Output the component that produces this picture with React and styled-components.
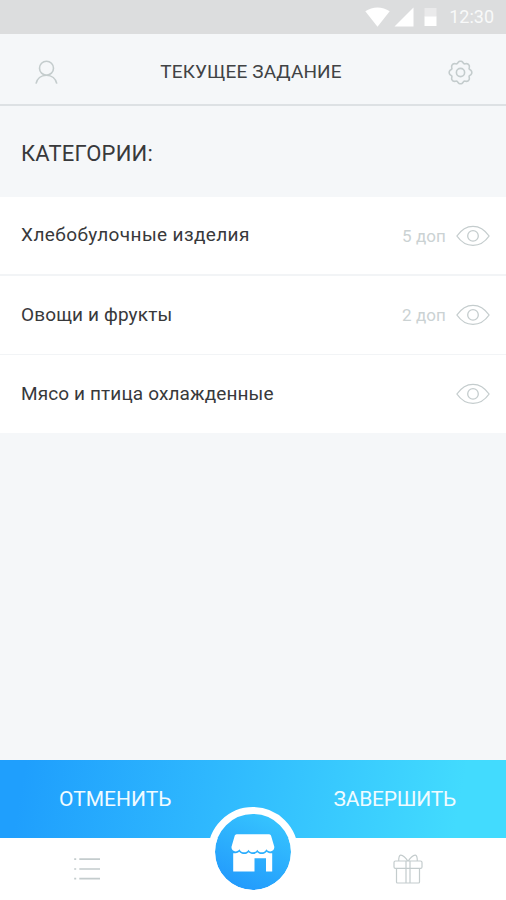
import React from "react";
import styled, { createGlobalStyle } from "styled-components";

const GlobalStyle = createGlobalStyle`
  :root {
    --bg: #f5f7f9;
    --text: #38393b;
    --muted: #cbd2d3;
    --icon: #c4cccd;
  }

  * {
    box-sizing: border-box;
  }

  body {
    margin: 0;
    background: var(--bg);
    font-family: Roboto, "Liberation Sans", sans-serif;
  }
`;

const Screen = styled.div`
  display: flex;
  flex-direction: column;
  width: 506px;
  height: 900px;
  background: var(--bg);
  overflow: hidden;
`;

const StatusBar = styled.div`
  display: flex;
  flex: none;
  justify-content: flex-end;
  align-items: center;
  height: 34px;
  padding-right: 12px;
  background: #dcddde;
`;

const Clock = styled.span`
  margin-left: 12px;
  font-size: 18px;
  line-height: 34px;
  color: #f8f9f9;
`;

const Header = styled.header`
  display: flex;
  flex: none;
  justify-content: space-between;
  align-items: center;
  height: 72px;
  padding: 7px 33px 0 34px;
  border-bottom: 2px solid #dde1e4;
`;

const Title = styled.h1`
  margin: 0 0 3px;
  padding-right: 5px;
  font-size: 19px;
  font-weight: 400;
  letter-spacing: 0.12px;
  color: #414345;
`;

const Heading = styled.h2`
  flex: none;
  height: 91px;
  margin: 0;
  padding: 1px 21px 0;
  font-size: 22px;
  font-weight: 400;
  line-height: 94px;
  letter-spacing: 0.2px;
  color: var(--text);
`;

const List = styled.ul`
  margin: 0;
  padding: 0;
  list-style: none;
`;

const Row = styled.li`
  display: flex;
  align-items: center;
  height: ${({ height }) => height}px;
  padding: 0 16px 0 21px;
  background: #fff;
  border-bottom: ${({ $divider }) => $divider}px solid #f2f4f6;
`;

const RowName = styled.span`
  flex: 1;
  padding-bottom: 1px;
  font-size: 19px;
  line-height: 24px;
  letter-spacing: ${({ $spacing }) => $spacing}px;
  color: var(--text);
`;

const RowCount = styled.span`
  margin-right: 10px;
  font-size: 17px;
  line-height: 24px;
  letter-spacing: 0.1px;
  color: var(--muted);
`;

const Footer = styled.footer`
  position: relative;
  flex: none;
  margin-top: auto;
`;

const Actions = styled.div`
  display: flex;
  justify-content: space-between;
  height: 78px;
  padding: 0 50px 0 59px;
  background: linear-gradient(100deg, #1f9ffd 5%, #2fb9fe 43%, #42dbfe 90%);
`;

const Action = styled.button`
  padding: 0;
  border: 0;
  background: none;
  font: 400 21px/77px Roboto, "Liberation Sans", sans-serif;
  letter-spacing: ${({ $spacing }) => $spacing}px;
  color: #f0fbff;
  cursor: pointer;
`;

const Tabs = styled.nav`
  display: flex;
  justify-content: space-between;
  align-items: center;
  height: 62px;
  padding: 0 83px 0 74px;
  background: #fff;
`;

const ShopButton = styled.button`
  position: absolute;
  top: 47px;
  left: 208px;
  display: flex;
  width: 90px;
  height: 90px;
  padding: 2px 0 0;
  align-items: center;
  justify-content: center;
  border: 7px solid #fff;
  border-radius: 50%;
  background: linear-gradient(25deg, #2197fc 5%, #36c4fe 90%) padding-box;
  cursor: pointer;
`;

const Icon = styled.svg`
  display: block;
  flex: none;
  fill: none;
  stroke: var(--icon);
  stroke-width: ${({ $weight }) => $weight || 1.6};
`;

const SolidIcon = styled.svg`
  display: block;
  flex: none;
  margin-left: ${({ $gap }) => $gap || 0}px;
  fill: #fff;
`;

// eight rounded teeth around the centre
const gearPath =
  Array.from({ length: 97 }, (_, i) => {
    const a = (i / 96) * Math.PI * 2;
    const r = 10.5 + 0.95 * Math.cos(8 * a) - 0.15 * Math.cos(16 * a);
    const x = (12.5 + r * Math.sin(a)).toFixed(2);
    const y = (12.5 - r * Math.cos(a)).toFixed(2);
    return `${i ? "L" : "M"}${x} ${y}`;
  }).join("") + "Z";

const UserIcon = () => (
  <Icon width="25" height="25" viewBox="0 0 25 25">
    <circle cx="12.5" cy="8.2" r="7" />
    <path d="M2 23.6c1-5 5-8.400 10.400-8.400s9.400 3.400 10.400 8.400" />
  </Icon>
);

const GearIcon = () => (
  <Icon width="25" height="25" viewBox="0 0 25 25">
    <path d={gearPath} />
    <circle cx="12.5" cy="12.5" r="4.1" />
  </Icon>
);

const EyeIcon = () => (
  <Icon width="34" height="22" viewBox="0 0 34 22" $weight={1.3}>
    <path d="M.9 11C5.2 4.8 10.6 1.3 17 1.3S28.8 4.8 33.1 11C28.8 17.2 23.4 20.4 17 20.4S5.2 17.2.9 11Z" />
    <circle cx="17" cy="10.9" r="5.3" />
  </Icon>
);

const ListIcon = () => (
  <Icon width="26" height="24" viewBox="0 0 26 24" $weight={1.7}>
    <path d="M.2 2.1h2M5.3 2.1H26M.2 12h2M5.3 12H26M.2 21.7h2M5.3 21.7H26" />
  </Icon>
);

const GiftIcon = () => (
  <Icon width="30" height="30" viewBox="0 0 30 30" $weight={1.2}>
    <rect x="1" y="7" width="28" height="7.4" rx="1.5" />
    <path d="M3.5 14.4V28a1 1 0 0 0 1 1h21a1 1 0 0 0 1-1V14.4M13 7v22M17 7v22" />
    <path d="M14.5 7C13.3 4.3 9.8.9 7.6 1.2 5.8 1.5 5.7 5 5.7 7M15.5 7C16.7 4.3 20.2.9 22.4 1.2 24.2 1.5 24.3 5 24.3 7" />
  </Icon>
);

const ShopIcon = () => (
  <SolidIcon width="44" height="38" viewBox="0 0 44 38">
    <path d="M5.6.2h32.600a2 2 0 0 1 1.800 1.400l3.300 11.200c.3 3-1.800 4.600-4 4.600-1.700 0-3.100-.8-3.900-2.200-1.200 2.300-2.800 3.100-4.800 3.100-1.700 0-3.300-.8-4.300-2.600-1 1.800-2.600 2.600-4.400 2.600s-3.400-.8-4.400-2.600c-1 1.800-2.600 2.600-4.300 2.600-2 0-3.600-.8-4.800-3.100-.8 1.400-2.200 2.200-3.900 2.200-2.200 0-4.300-1.600-4-4.600L3.800 1.600A2 2 0 0 1 5.600.2Z" />
    <path d="M2.2 19.300c2.200.2 4.500-.3 6-1.500 2.800 3 6.800 3 9.400.4 2.700 2.400 6.100 2.400 8.700 0 2.700 2.600 6.700 2.600 9.400-.4 1.600 1.200 3.300 1.700 5.500 1.500v18.200H35V24.300H23.500v13.200H2.200Z" />
  </SolidIcon>
);

const StatusIcons = () => (
  <>
    <SolidIcon width="25" height="20" viewBox="0 0 25 20">
      <path d="M.3 4.3C7.5-.9 17.500-.9 24.700 4.300L12.500 19.700Z" />
    </SolidIcon>
    <SolidIcon width="20" height="20" viewBox="0 0 20 20" $gap={4}>
      <path d="M19.5.5v19H.5Z" />
    </SolidIcon>
    <SolidIcon width="13" height="18" viewBox="0 0 13 18" $gap={10}>
      <path d="M.5 0h12v9H.5Z" opacity=".4" />
      <path d="M.5 8.500h12v9.500H.5Z" />
    </SolidIcon>
  </>
);

const categories = [
  {
    name: "Хлебобулочные изделия",
    count: "5 доп",
    height: 79,
    divider: 2,
    spacing: 0.38,
  },
  {
    name: "Овощи и фрукты",
    count: "2 доп",
    height: 79,
    divider: 1,
    spacing: 0.14,
  },
  {
    name: "Мясо и птица охлажденные",
    height: 78,
    divider: 0,
    spacing: 0.12,
  },
];

const App = () => {
  return (
    <Screen>
      <GlobalStyle />
      <StatusBar>
        <StatusIcons />
        <Clock>12:30</Clock>
      </StatusBar>
      <Header>
        <UserIcon />
        <Title>ТЕКУЩЕЕ ЗАДАНИЕ</Title>
        <GearIcon />
      </Header>
      <Heading>КАТЕГОРИИ:</Heading>
      <List>
        {categories.map(({ name, count, height, divider, spacing }) => (
          <Row key={name} height={height} $divider={divider}>
            <RowName $spacing={spacing}>{name}</RowName>
            {count && <RowCount>{count}</RowCount>}
            <EyeIcon />
          </Row>
        ))}
      </List>
      <Footer>
        <Actions>
          <Action $spacing={0}>ОТМЕНИТЬ</Action>
          <Action $spacing={-0.25}>ЗАВЕРШИТЬ</Action>
        </Actions>
        <Tabs>
          <ListIcon />
          <GiftIcon />
        </Tabs>
        <ShopButton>
          <ShopIcon />
        </ShopButton>
      </Footer>
    </Screen>
  );
};

export default App;
